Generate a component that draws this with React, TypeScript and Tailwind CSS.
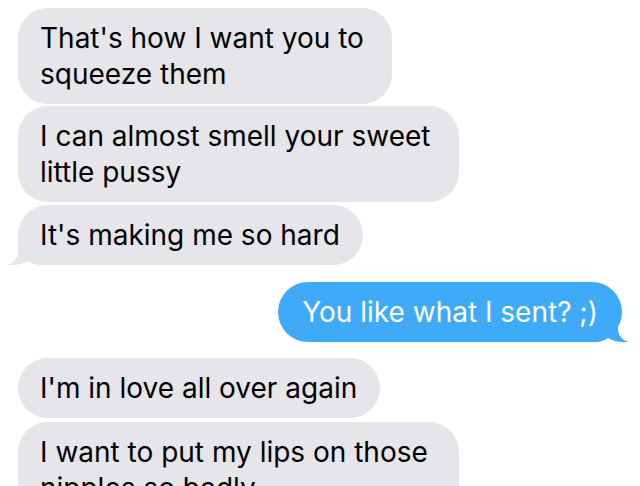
const font = { fontFamily: "Inter, 'Noto Sans', sans-serif" };

const Tail = ({ color, side }: { color: string; side: "left" | "right" }) => (
  <svg
    viewBox="0 0 40 30"
    className={`absolute bottom-0 w-[40px] h-[30px] ${side === "left" ? "-left-[10px]" : "-right-[6px] -scale-x-100"}`}
  >
    <path
      d="M10 0 L10 17 C10 23 6 28 0 30 C8 30.5 15 29 20 26 C24 28.5 28 30 34 30 L40 30 L40 0 Z"
      fill={color}
    />
  </svg>
);

const Received = ({ text, className = "", tail = false }: { text: string; className?: string; tail?: boolean }) => (
  <div className={`relative self-start ml-[18px] ${className}`}>
    {tail && <Tail color="#e5e5ea" side="left" />}
    <div className="relative rounded-[30px] bg-[#e5e5ea] pl-[22px] pr-[23px] py-[12px] text-[28px] leading-[36px] text-black">
      {text}
    </div>
  </div>
);

const Sent = ({ text, className = "" }: { text: string; className?: string }) => (
  <div className={`relative self-end mr-[18px] ${className}`}>
    <Tail color="#3eaaf8" side="right" />
    <div className="relative rounded-[30px] bg-[#3eaaf8] pl-[24px] pr-[24px] py-[12px] text-[28px] leading-[36px] text-white">
      {text}
    </div>
  </div>
);

export default function App() {
  return (
    <div className="w-[640px] h-[486px] overflow-hidden bg-white flex flex-col pt-[8px]" style={font}>
      <Received text="That's how I want you to squeeze them" className="w-[374px]" />
      <Received text="I can almost smell your sweet little pussy" className="w-[441px] mt-[2px]" />
      <Received text="It's making me so hard" className="mt-[3px]" tail />
      <Sent text="You like what I sent? ;)" className="mt-[17px]" />
      <Received text="I'm in love all over again" className="mt-[16px]" />
      <Received text="I want to put my lips on those nipples so badly" className="w-[441px] mt-[4px]" />
    </div>
  );
}
